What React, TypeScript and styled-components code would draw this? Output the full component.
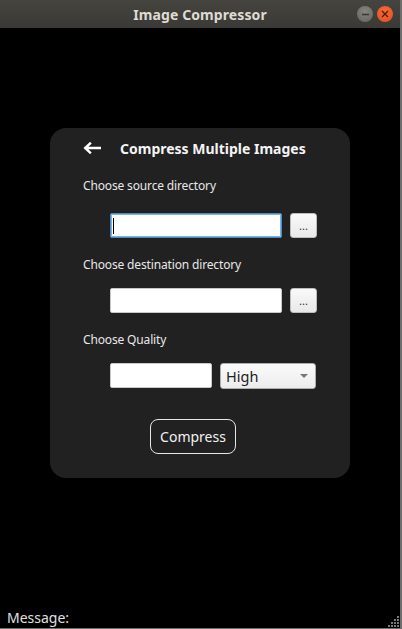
import React from "react";
import styled, { createGlobalStyle } from "styled-components";

const Global = createGlobalStyle`
  html, body { margin: 0; padding: 0; background: #000; }
  body { font-family: "Noto Sans", "DejaVu Sans", sans-serif; }
  * { box-sizing: border-box; }
`;

const Window = styled.div`
  width: 402px;
  height: 629px;
  display: flex;
  flex-direction: column;
  position: relative;
  background: #000;
  border-right: 2px solid #6e6e6e;
  border-bottom: 1px solid #6e6e6e;
  overflow: hidden;
`;

const TitleBar = styled.div`
  height: 28px;
  flex: none;
  background: linear-gradient(#45443f, #3a3935);
  display: flex;
  align-items: center;
  justify-content: center;
  position: relative;
`;

const TitleText = styled.span`
  color: #dfdbd2;
  font-family: "Noto Sans", sans-serif;
  font-weight: 700;
  font-size: 14px;
  letter-spacing: 0.1px;
`;

const Controls = styled.div`
  position: absolute;
  right: 7px;
  top: 6px;
  display: flex;
  gap: 4px;
`;

const CircleBtn = styled.div<{ $close?: boolean }>`
  width: 16px;
  height: 16px;
  border-radius: 50%;
  display: flex;
  align-items: center;
  justify-content: center;
  background: ${(p) =>
    p.$close
      ? "radial-gradient(circle at 50% 35%, #f26b3a, #e2501c)"
      : "radial-gradient(circle at 50% 35%, #86857f, #64635f)"};
`;

const Body = styled.div`
  flex: 1;
  display: flex;
  flex-direction: column;
  background: #000;
`;

const CardArea = styled.div`
  flex: 1;
  display: flex;
  justify-content: center;
  padding-top: 100px;
`;

const Card = styled.div`
  width: 300px;
  height: 350px;
  background: #212121;
  border-radius: 16px;
  padding: 10px 0 0 33px;
  display: flex;
  flex-direction: column;
`;

const Header = styled.div`
  height: 20px;
  display: flex;
  align-items: center;
  gap: 19px;
`;

const Heading = styled.span`
  color: #f4f4f4;
  font-weight: 700;
  font-size: 14px;
  font-family: "Noto Sans", sans-serif;
`;

const Label = styled.div<{ $top: number }>`
  margin-top: ${(p) => p.$top}px;
  height: 16px;
  line-height: 16px;
  color: #e8e8e8;
  font-size: 12px;
  font-family: "Noto Sans", sans-serif;
  letter-spacing: -0.15px;
`;

const Row = styled.div<{ $top: number }>`
  margin-top: ${(p) => p.$top}px;
  margin-left: 27px;
  display: flex;
  gap: 8px;
  align-items: flex-start;
`;

const TextBox = styled.div<{ $w: number; $focus?: boolean }>`
  width: ${(p) => p.$w}px;
  height: 25px;
  background: #fff;
  border-radius: 2px;
  border: 1px solid ${(p) => (p.$focus ? "#4a8bc2" : "#c8c8c8")};
  box-shadow: ${(p) => (p.$focus ? "inset 0 0 0 1px #7fb2dc" : "none")};
  position: relative;
  display: flex;
  align-items: center;
  padding-left: 2px;
`;

const Caret = styled.span`
  width: 1px;
  height: 16px;
  background: #000;
`;

const DotsButton = styled.div`
  width: 27px;
  height: 25px;
  border: 1px solid #bdbdbd;
  border-radius: 3px;
  background: linear-gradient(#f9f9f9, #e9e9e9);
  display: flex;
  align-items: flex-end;
  justify-content: center;
  padding-bottom: 6px;
  color: #333;
  font-size: 11px;
  line-height: 1;
  font-family: "Noto Sans", sans-serif;
`;

const Combo = styled.div`
  width: 96px;
  height: 26px;
  border: 1px solid #aeaeae;
  border-radius: 3px;
  background: linear-gradient(#fbfbfb, #ececec);
  display: flex;
  align-items: center;
  justify-content: space-between;
  padding: 0 7px 0 5px;
  color: #222;
  font-size: 14.5px;
  font-family: "Noto Sans", sans-serif;
`;

const Arrow = styled.span`
  width: 0;
  height: 0;
  border-left: 4px solid transparent;
  border-right: 4px solid transparent;
  border-top: 4px solid #777;
`;

const CompressButton = styled.div`
  margin-top: 30px;
  margin-left: 67px;
  width: 86px;
  height: 35px;
  border: 1px solid #e6e6e6;
  border-radius: 8px;
  display: flex;
  align-items: center;
  justify-content: center;
  color: #f2f2f2;
  font-size: 14px;
  font-family: "Noto Sans", sans-serif;
`;

const Message = styled.div`
  height: 24px;
  padding: 5px 0 0 7px;
  color: #e0e0e0;
  font-size: 14px;
  line-height: 18px;
  font-family: "Noto Sans", sans-serif;
`;

const Grip = styled.svg`
  position: absolute;
  right: 0;
  bottom: 0;
`;

export default function App() {
  const grip: [number, number][] = [];
  for (let r = 0; r < 4; r++) {
    for (let c = 3 - r; c < 4; c++) grip.push([c * 3, r * 3]);
  }
  return (
    <>
      <Global />
      <Window>
        <TitleBar>
          <TitleText>Image Compressor</TitleText>
          <Controls>
            <CircleBtn>
              <svg width="9" height="9" viewBox="0 0 9 9">
                <line x1="1" y1="4.5" x2="8" y2="4.5" stroke="#3b3a37" strokeWidth="1.6" />
              </svg>
            </CircleBtn>
            <CircleBtn $close>
              <svg width="8" height="8" viewBox="0 0 8 8">
                <path d="M1 1L7 7M7 1L1 7" stroke="#5a1a08" strokeWidth="1.4" />
              </svg>
            </CircleBtn>
          </Controls>
        </TitleBar>
        <Body>
          <CardArea>
            <Card>
              <Header>
                <svg width="18" height="12" viewBox="0 0 18 12">
                  <path d="M17 6H2.5M7 1.5L2.2 6L7 10.5" fill="none" stroke="#fff" strokeWidth="2.4" strokeLinecap="square" />
                </svg>
                <Heading>Compress Multiple Images</Heading>
              </Header>
              <Label $top={20}>Choose source directory</Label>
              <Row $top={19}>
                <TextBox $w={172} $focus>
                  <Caret />
                </TextBox>
                <DotsButton>...</DotsButton>
              </Row>
              <Label $top={19}>Choose destination directory</Label>
              <Row $top={15}>
                <TextBox $w={172} />
                <DotsButton>...</DotsButton>
              </Row>
              <Label $top={19}>Choose Quality</Label>
              <Row $top={15}>
                <TextBox $w={102} />
                <Combo>
                  High
                  <Arrow />
                </Combo>
              </Row>
              <CompressButton>Compress</CompressButton>
            </Card>
          </CardArea>
          <Message>Message:</Message>
        </Body>
        <Grip width="12" height="12" viewBox="0 0 12 12">
          {grip.map(([x, y], i) => (
            <rect key={i} x={x} y={y} width="2" height="2" fill="#7a7a7a" />
          ))}
        </Grip>
      </Window>
    </>
  );
}
